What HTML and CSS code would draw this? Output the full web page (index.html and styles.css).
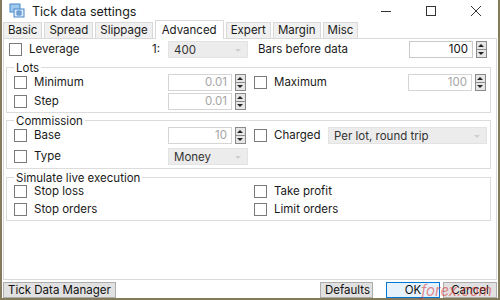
FILE: index.html
```html
<!DOCTYPE html>
<html lang="en">
<head>
    <meta charset="UTF-8">
    <title>Tick data settings</title>
    <link rel="stylesheet" href="styles.css">
</head>
<body>
    <div class="window">
        <div class="titlebar">
            <svg class="app-icon" width="16" height="16" viewBox="0 0 16 16">
                <rect x="1" y="1" width="10" height="8" fill="#9ec9ee" stroke="#4a86c5"/>
                <rect x="5" y="6" width="10" height="8" fill="#d7ebfb" stroke="#4a86c5"/>
                <path d="M7 9h6M7 11h6M9 7v6M11 7v6" stroke="#4a86c5" stroke-width="1"/>
            </svg>
            <span class="title">Tick data settings</span>
            <div class="controls">
                <span class="ctl"><svg width="10" height="10"><path d="M0 5.5h10" stroke="#333"/></svg></span>
                <span class="ctl"><svg width="10" height="10"><rect x="0.5" y="0.5" width="9" height="9" fill="none" stroke="#333"/></svg></span>
                <span class="ctl"><svg width="10" height="10"><path d="M0 0L10 10M10 0L0 10" stroke="#333"/></svg></span>
            </div>
        </div>

        <div class="tabs">
            <span class="tab">Basic</span>
            <span class="tab">Spread</span>
            <span class="tab">Slippage</span>
            <span class="tab active">Advanced</span>
            <span class="tab">Expert</span>
            <span class="tab">Margin</span>
            <span class="tab">Misc</span>
        </div>

        <div class="panel">
            <div class="top-row">
                <div class="cell">
                    <label class="check"><span class="box"></span>Leverage</label>
                    <span class="ratio">1:</span>
                    <span class="combo short">400<i class="arrow"></i></span>
                </div>
                <div class="cell right">
                    <span class="plain">Bars before data</span>
                    <span class="field"><span class="input enabled">100</span><span class="spin"></span></span>
                </div>
            </div>

            <div class="group lots">
                <div class="group-title">Lots</div>
                <div class="row">
                    <div class="cell">
                        <label class="check"><span class="box"></span>Minimum</label>
                        <span class="field"><span class="input">0.01</span><span class="spin"></span></span>
                    </div>
                    <div class="cell">
                        <label class="check"><span class="box"></span>Maximum</label>
                        <span class="field"><span class="input">100</span><span class="spin"></span></span>
                    </div>
                </div>
                <div class="row">
                    <div class="cell">
                        <label class="check"><span class="box"></span>Step</label>
                        <span class="field"><span class="input">0.01</span><span class="spin"></span></span>
                    </div>
                </div>
            </div>

            <div class="group commission">
                <div class="group-title">Commission</div>
                <div class="row">
                    <div class="cell">
                        <label class="check"><span class="box"></span>Base</label>
                        <span class="field"><span class="input">10</span><span class="spin"></span></span>
                    </div>
                    <div class="cell charged">
                        <label class="check"><span class="box"></span>Charged</label>
                        <span class="combo wide">Per lot, round trip<i class="arrow"></i></span>
                    </div>
                </div>
                <div class="row">
                    <div class="cell">
                        <label class="check"><span class="box"></span>Type</label>
                        <span class="combo short">Money<i class="arrow"></i></span>
                    </div>
                </div>
            </div>

            <div class="group live">
                <div class="group-title">Simulate live execution</div>
                <div class="row">
                    <div class="cell"><label class="check"><span class="box"></span>Stop loss</label></div>
                    <div class="cell"><label class="check"><span class="box"></span>Take profit</label></div>
                </div>
                <div class="row">
                    <div class="cell"><label class="check"><span class="box"></span>Stop orders</label></div>
                    <div class="cell"><label class="check"><span class="box"></span>Limit orders</label></div>
                </div>
            </div>
        </div>

        <div class="buttons">
            <button class="btn">Tick Data Manager</button>
            <span class="spacer"></span>
            <button class="btn defaults">Defaults</button>
            <button class="btn ok">OK</button>
            <button class="btn cancel">Cancel</button>
            <span class="watermark">forex.com</span>
        </div>
    </div>
</body>
</html>
```

FILE: styles.css
```css
body {
    margin: 0;
    font-family: 'Inter', 'Open Sans', sans-serif;
    font-size: 11.5px;
    color: #1a1a1a;
    background: #fff;
}

.window {
    position: relative;
    width: 500px;
    height: 300px;
    box-sizing: border-box;
    border-left: 2px solid #857a5c;
    border-right: 2px solid #857a5c;
    border-bottom: 2px solid #857a5c;
    background: #fff;
    display: flex;
    flex-direction: column;
}

/* title bar */
.titlebar {
    height: 22px;
    display: flex;
    align-items: center;
}

.app-icon {
    margin-left: 7px;
    margin-right: 7px;
}

.title {
    font-size: 12.5px;
    flex-grow: 1;
}

.controls {
    display: flex;
}

.ctl {
    width: 45px;
    height: 22px;
    display: flex;
    align-items: center;
    justify-content: center;
}

/* tabs */
.tabs {
    height: 16px;
    display: flex;
    align-items: flex-end;
    padding-left: 1px;
    gap: 2px;
    position: relative;
    z-index: 1;
}

.tab {
    height: 15px;
    line-height: 15px;
    padding: 0 4px;
    background: #f0f0f0;
    border: 1px solid #d9d9d9;
    border-bottom: none;
}

.tab.active {
    height: 18px;
    line-height: 18px;
    padding: 0 6px;
    background: #fff;
    margin-bottom: -1px;
}

/* panel */
.panel {
    margin: 0 1px;
    height: 243px;
    border: 1px solid #d9d9d9;
    padding: 1px 2px 0 2px;
}

.top-row, .row {
    display: flex;
}

.top-row {
    height: 18px;
    padding-left: 3px;
}

.cell {
    width: 240px;
    flex-shrink: 0;
    display: flex;
    align-items: center;
}

.top-row .cell {
    width: 249px;
}

.top-row .cell.right {
    width: 236px;
}

.check {
    display: flex;
    align-items: center;
    width: 154px;
}

.top-row .check {
    width: 143px;
}

.ratio {
    width: 16px;
}

.plain {
    width: 151px;
}

.box {
    width: 11px;
    height: 11px;
    border: 1px solid #7a7a7a;
    background: #fff;
    margin-right: 7px;
}

.field {
    display: flex;
    align-items: center;
}

.input {
    width: 58px;
    height: 15px;
    line-height: 15px;
    border: 1px solid #d5d5d5;
    text-align: right;
    padding-right: 4px;
    color: #a6a6a6;
}

.input.enabled {
    color: #111;
    border-color: #c9c9c9;
}

.spin {
    width: 9px;
    height: 15px;
    margin-left: 3px;
    border: 1px solid #8a8a8a;
    background:
        linear-gradient(#8a8a8a, #8a8a8a) 0 7px / 100% 1px no-repeat,
        #e6e6e6;
    position: relative;
}

.spin::before, .spin::after {
    content: '';
    position: absolute;
    left: 1px;
    border-left: 3.5px solid transparent;
    border-right: 3.5px solid transparent;
}

.spin::before {
    top: 2px;
    border-bottom: 3px solid #222;
}

.spin::after {
    bottom: 2px;
    border-top: 3px solid #222;
}

.combo {
    height: 17px;
    line-height: 17px;
    background: #ececec;
    border: 1px solid #e3e3e3;
    box-sizing: border-box;
    padding-left: 5px;
    color: #333;
    position: relative;
}

.combo.short {
    width: 80px;
}

.combo.wide {
    width: 159px;
}

.arrow {
    position: absolute;
    right: 6px;
    top: 7px;
    border-left: 3px solid transparent;
    border-right: 3px solid transparent;
    border-top: 3px solid #cfcfcf;
}

.charged .check {
    width: 74px;
}

/* group boxes */
.group {
    margin: 0 3px 0 0;
    border: 1px solid #dcdcdc;
    padding: 0 7px 2px 7px;
}

.group-title {
    width: fit-content;
    line-height: 14px;
    margin: -7px 0 -2px 0;
    padding: 0 2px;
    background: #fff;
}

.row {
    height: 18px;
}

.lots {
    margin-top: 9px;
}

.lots .row + .row {
    margin-top: 1px;
}

.commission {
    margin-top: 7px;
    padding-bottom: 3px;
}

.commission .row + .row {
    margin-top: 3px;
}

.live {
    margin-top: 8px;
}

.live .group-title {
    margin-bottom: -3px;
}

/* bottom buttons */
.buttons {
    display: flex;
    align-items: flex-end;
    padding: 2px 1px 0 1px;
    gap: 3px;
    position: relative;
}

.spacer {
    flex-grow: 1;
}

.btn {
    font-family: inherit;
    font-size: 11.5px;
    height: 16px;
    padding: 0 4px;
    line-height: 14px;
    background: #e1e1e1;
    border: 1px solid #adadad;
    color: #111;
}

.btn.defaults {
    width: 53px;
    margin-right: 10px;
}

.btn.ok, .btn.cancel {
    width: 54px;
}

.btn.ok {
    background: #e5f1fb;
    border-color: #0078d7;
}

.watermark {
    position: absolute;
    right: 6px;
    bottom: -2px;
    font-style: italic;
    font-size: 15px;
    color: rgba(220, 40, 40, 0.55);
}
```
